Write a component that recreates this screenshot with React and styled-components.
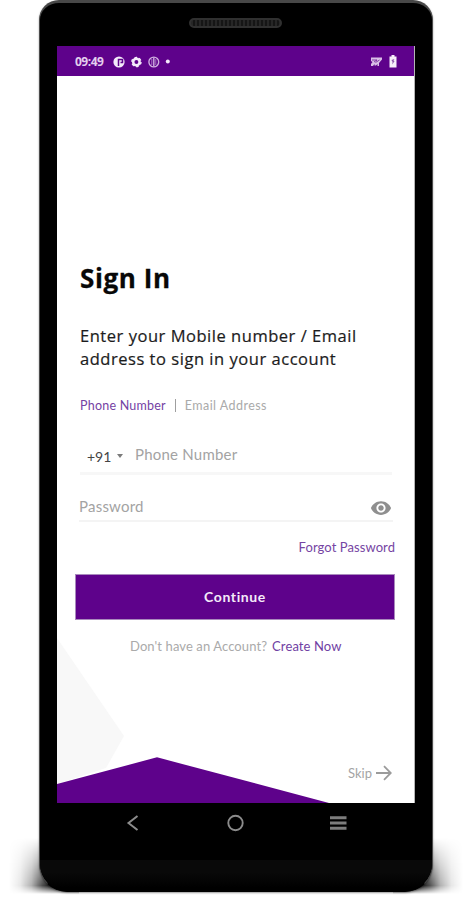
import styled, { createGlobalStyle } from "styled-components";
import { MdRemoveRedEye } from "react-icons/md";

const GlobalStyle = createGlobalStyle`
  * {
    box-sizing: border-box;
  }
  body {
    margin: 0;
    background: #ffffff;
  }
  svg {
    display: block;
    flex-shrink: 0;
  }
`;

const Page = styled.div`
  width: 469px;
  height: 900px;
  overflow: hidden;
  background: #ffffff;
  font-family: Lato, sans-serif;
  white-space: nowrap;
`;

const Stage = styled.div`
  position: relative;
  width: 394px;
  margin-left: 39px;
`;

const Shadow = styled.div`
  position: absolute;
  top: 838px;
  ${({ $side }) => $side}: -30px;
  width: 70px;
  height: 56px;
  background: linear-gradient(
    to ${({ $side }) => $side},
    #000000 0%,
    #000000 35%,
    rgba(0, 0, 0, 0.7) 52%,
    rgba(0, 0, 0, 0.3) 68%,
    rgba(0, 0, 0, 0.09) 84%,
    transparent 100%
  );
  mask-image: linear-gradient(transparent, rgba(0, 0, 0, 0.5) 45%, #000 85%, transparent);
`;

const Phone = styled.div`
  position: relative;
  display: flex;
  flex-direction: column;
  height: 892px;
  background: #000000;
  border: 1px solid #4b4b4b;
  border-top: 3px solid #484848;
  border-bottom-color: #000000;
  border-radius: 20px 20px 28px 28px;
  overflow: hidden;
  box-shadow: 0 1px 2px rgba(0, 0, 0, 0.4);
`;

const Top = styled.header`
  height: 43px;
  display: flex;
  justify-content: center;
  padding-top: 15px;
`;

const Speaker = styled.div`
  width: 93px;
  height: 10px;
  margin-right: 1px;
  border: 2px solid #303030;
  border-radius: 6px;
  background: repeating-linear-gradient(90deg, #262626 0 2px, #151515 2px 4px);
`;

const Screen = styled.main`
  position: relative;
  display: flex;
  flex-direction: column;
  width: 358px;
  height: 757px;
  margin-left: 17px;
  background: #ffffff;
  border-right: 1px solid #b5b5b5;
  flex-shrink: 0;
`;

const Backdrop = styled.svg`
  position: absolute;
  inset: 0;
`;

const Status = styled.div`
  position: relative;
  display: flex;
  align-items: center;
  height: 30px;
  padding: 1px 17px 0 18px;
  background: #5e028b;
  flex-shrink: 0;
`;

const Clock = styled.span`
  width: 38px;
  padding-top: 1px;
  font: 700 12px/14px "Open Sans", sans-serif;
  letter-spacing: -0.5px;
  color: #e3cfee;
`;

const StatusRight = styled.div`
  display: flex;
  align-items: center;
  gap: 6px;
  margin-left: auto;
`;

const Form = styled.section`
  position: relative;
  display: flex;
  flex-direction: column;
  padding: 184px 19px 0 23px;
`;

const Title = styled.h1`
  margin: 0;
  font: 700 26px/36px "Open Sans", sans-serif;
  letter-spacing: 0.6px;
  color: #080808;
  -webkit-text-stroke: 0.3px #080808;
`;

const Subtitle = styled.p`
  margin: 28px 0 0;
  font: 400 16.5px/23px "Open Sans", sans-serif;
  letter-spacing: 0.53px;
  color: #1c1c1c;
  -webkit-text-stroke: 0.2px #1c1c1c;
`;

const Tabs = styled.div`
  display: flex;
  align-items: center;
  height: 20px;
  margin-top: 25px;
`;

const Tab = styled.span`
  font-size: 12.5px;
  letter-spacing: ${({ $active }) => ($active ? "0.22px" : "0.45px")};
  color: ${({ $active }) => ($active ? "#7442a4" : "#aaaaaa")};
`;

const Divider = styled.i`
  width: 1px;
  height: 13px;
  margin: 0 9px;
  background: #9f9f9f;
`;

const PhoneField = styled.div`
  display: flex;
  align-items: center;
  width: 312px;
  height: 39px;
  margin-top: 21px;
  border-bottom: 3px solid #f7f7f7;
`;

const Prefix = styled.span`
  width: 29px;
  margin-left: 7px;
  padding-top: 4px;
  font-size: 14px;
  color: #444444;
`;

const Caret = styled.i`
  margin: 3px 12px 0 1px;
  border: 3px solid transparent;
  border-top: 4px solid #7b7b7b;
  border-bottom: 0;
`;

const Placeholder = styled.span`
  font-size: 15px;
  letter-spacing: 0.22px;
  color: #a3a3a3;
`;

const PasswordField = styled.div`
  display: flex;
  align-items: center;
  justify-content: space-between;
  width: 314px;
  height: 30px;
  margin: 17px 0 0 -1px;
  padding: 3px 1px 0 0;
  border-bottom: 2px solid #f4f4f4;

  ${Placeholder} {
    padding-bottom: 3px;
  }
`;

const Forgot = styled.a`
  align-self: flex-end;
  margin-top: 16px;
  font-size: 13px;
  line-height: 18px;
  letter-spacing: 0.08px;
  color: #7645a3;
`;

const ContinueBtn = styled.button`
  width: 320px;
  height: 46px;
  margin: 18px 0 0 -5px;
  padding: 0;
  border: 1px solid #a98abd;
  background: #5e028b;
  color: #f4ebf9;
  font: 700 14px/18px Lato, sans-serif;
  letter-spacing: 0.6px;
`;

const SignUp = styled.p`
  display: flex;
  gap: 5px;
  margin: 17px 0 0 50px;
  font-size: 13px;
  line-height: 18px;
`;

const Question = styled.span`
  color: #aaaaaa;
  letter-spacing: 0.1px;
`;

const Create = styled.a`
  color: #7041a3;
  letter-spacing: 0.1px;
`;

const Skip = styled.div`
  position: relative;
  display: flex;
  align-items: center;
  gap: 4px;
  margin: auto 22px 22px auto;
`;

const SkipText = styled.span`
  font-size: 13px;
  line-height: 16px;
  color: #a4a4a4;
`;

const Nav = styled.nav`
  display: flex;
  justify-content: space-between;
  align-items: center;
  height: 40px;
  padding: 0 85px 0 86px;
  flex-shrink: 0;
`;

const Chin = styled.div`
  flex: 1;
  margin-top: 17px;
  background: linear-gradient(#090909 0 40%, #000000 90%);
`;

function StatusBar() {
  return (
    <Status>
      <Clock>09:49</Clock>
      <svg width="57" height="14" viewBox="0 0 57 14" fill="none">
        <circle cx="6" cy="7" r="5.6" fill="#f4eafa" />
        <path d="M5.5 11V4.5h4v3H7.5" stroke="#5e028b" strokeWidth="1.5" />
        <circle cx="23.4" cy="7" r="3.2" stroke="#f4eafa" strokeWidth="2.5" />
        <circle
          cx="23.4"
          cy="7"
          r="4.6"
          stroke="#f4eafa"
          strokeWidth="1.4"
          strokeDasharray="2.6 2.2"
        />
        <circle cx="40.8" cy="7" r="4.9" stroke="#cfaee0" strokeWidth="1.4" />
        <path d="M38.8 4v6M42.8 4v6" stroke="#a673c2" />
        <path d="M40.8 2.5v9" stroke="#cfaee0" strokeWidth="1.4" />
        <circle cx="54.8" cy="6.5" r="2" fill="#f4eafa" />
      </svg>
      <StatusRight>
        <svg width="13" height="12" viewBox="0 0 13 12" fill="none">
          <path d="M1 1.5h11v2L9 7v3H7.5V8L6 9.5H4.5V8L3 10H1V8l1.5-2L1 5z" fill="#d9bfe6" />
          <path d="M2 4h5l-3 2M5.5 6.5l4-2.5" stroke="#6d1b96" strokeWidth=".8" />
        </svg>
        <svg width="8" height="13" viewBox="0 0 8 13">
          <path d="M2.5 0h3v1.5h2V12.5H.5v-11h2z" fill="#f7effb" />
          <path d="M5.4 4 2.5 5l.6 1.4h.5l-.3 3.2L5.6 6H4.5z" fill="#8d5aab" />
        </svg>
      </StatusRight>
    </Status>
  );
}

function SignInForm() {
  return (
    <Form>
      <Title>Sign In</Title>
      <Subtitle>
        Enter your Mobile number / Email
        <br />
        address to sign in your account
      </Subtitle>

      <Tabs>
        <Tab $active>Phone Number</Tab>
        <Divider />
        <Tab>Email Address</Tab>
      </Tabs>

      <PhoneField>
        <Prefix>+91</Prefix>
        <Caret />
        <Placeholder>Phone Number</Placeholder>
      </PhoneField>

      <PasswordField>
        <Placeholder>Password</Placeholder>
        <MdRemoveRedEye size={22} color="#8f8f8f" />
      </PasswordField>

      <Forgot>Forgot Password</Forgot>
      <ContinueBtn>Continue</ContinueBtn>

      <SignUp>
        <Question>Don't have an Account?</Question>
        <Create>Create Now</Create>
      </SignUp>
    </Form>
  );
}

function NavBar() {
  return (
    <Nav>
      <svg width="14" height="18" viewBox="0 0 14 18" fill="none">
        <path d="M11.5 2 2.5 9l9 7" stroke="#8b8b8b" strokeWidth="2" />
      </svg>
      <svg width="18" height="18" viewBox="0 0 18 18" fill="none">
        <circle cx="9.5" cy="9" r="7.2" stroke="#8b8b8b" strokeWidth="1.9" />
      </svg>
      <svg width="18" height="18" viewBox="0 0 18 18" fill="none">
        <path d="M1 3.7h16.5M1 9h16.5M1 14.3h16.5" stroke="#7d7d7d" strokeWidth="2.9" />
      </svg>
    </Nav>
  );
}

function App() {
  return (
    <Page>
      <GlobalStyle />
      <Stage>
        <Shadow $side="left" />
        <Shadow $side="right" />
        <Phone>
          <Top>
            <Speaker />
          </Top>
          <Screen>
            <Backdrop width="358" height="757" viewBox="0 0 358 757">
              <path d="M0 592 67 690 49 722 0 738z" fill="#f8f8f8" />
              <path d="M0 738 100 711.3 272 757H0z" fill="#5e028b" />
            </Backdrop>
            <StatusBar />
            <SignInForm />
            <Skip>
              <SkipText>Skip</SkipText>
              <svg width="16" height="16" viewBox="0 0 16 16" fill="none">
                <path d="M0 8h14.5M8 1.2 14.8 8 8 14.8" stroke="#9b9b9b" strokeWidth="1.8" />
              </svg>
            </Skip>
          </Screen>
          <NavBar />
          <Chin />
        </Phone>
      </Stage>
    </Page>
  );
}

export default App;
